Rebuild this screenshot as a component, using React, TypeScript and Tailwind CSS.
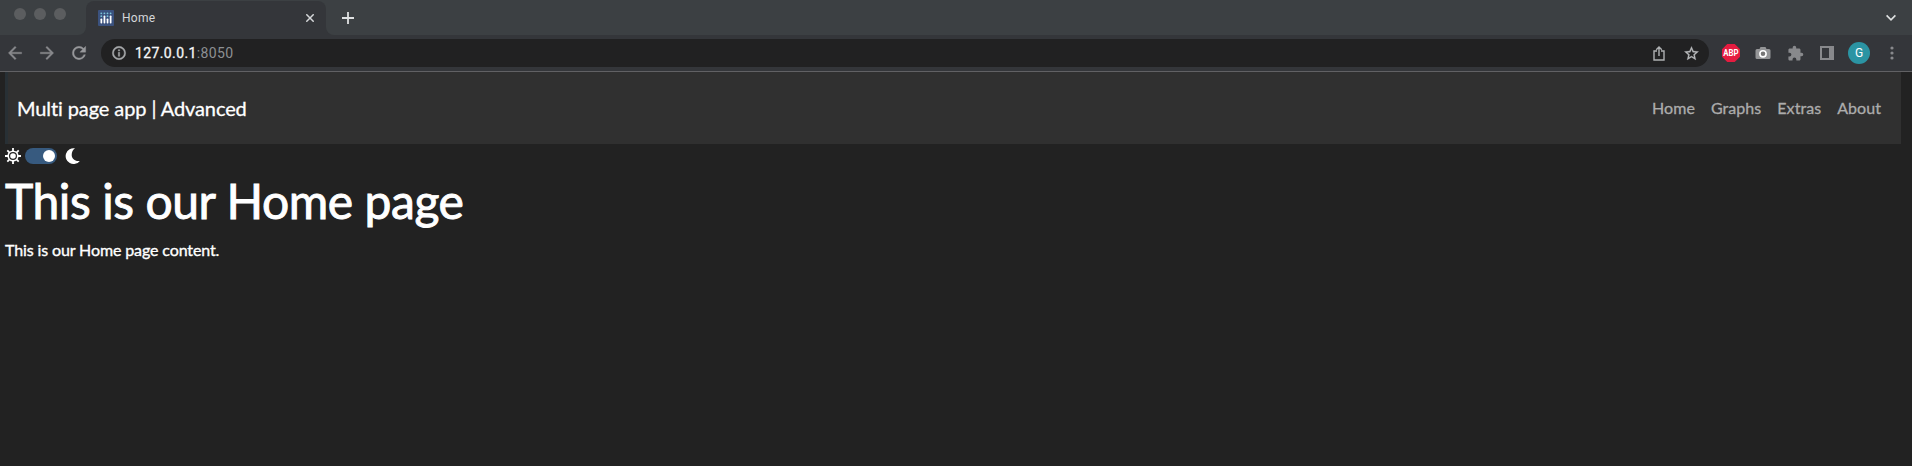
import React from "react";

const material = "shrink-0 fill-current";

function TabStrip() {
  return (
    <div className="flex h-[35px] bg-[#3c4043]">
      <div className="flex w-[86px] gap-2 pt-2 pl-[14px]">
        <span className="size-3 rounded-full bg-[#5b5d5f]" />
        <span className="size-3 rounded-full bg-[#5b5d5f]" />
        <span className="size-3 rounded-full bg-[#5b5d5f]" />
      </div>
      <div className="relative mt-px flex h-[34px] w-[240px] items-center rounded-t-lg bg-[#34363a] pl-3 text-[#d5d7d9]">
        <svg className="absolute bottom-0 -left-2 fill-[#34363a]" width="8" height="8">
          <path d="M8 0v8H0a8 8 0 0 0 8-8Z" />
        </svg>
        <svg className="absolute -right-2 bottom-0 fill-[#34363a]" width="8" height="8">
          <path d="M0 0v8h8a8 8 0 0 1-8-8Z" />
        </svg>
        <svg width="16" height="16" viewBox="0 0 16 16">
          <rect width="16" height="16" rx="1" fill="#3b527f" />
          <g fill="#7cc4d8">
            <circle cx="3.3" cy="3.3" r=".9" />
            <circle cx="6.4" cy="3.3" r=".9" />
            <circle cx="9.5" cy="3.3" r=".9" />
            <circle cx="12.6" cy="3.3" r=".9" />
            <circle cx="3.3" cy="6.2" r=".9" />
            <circle cx="9.5" cy="6.2" r=".9" />
          </g>
          <g fill="#fff">
            <rect x="2.5" y="8.5" width="1.7" height="5" rx=".7" />
            <rect x="5.6" y="5.5" width="1.7" height="8" rx=".7" />
            <rect x="8.7" y="8.5" width="1.7" height="5" rx=".7" />
            <rect x="11.8" y="5.5" width="1.7" height="8" rx=".7" />
          </g>
        </svg>
        <span className="ml-2 text-[12px] leading-4 tracking-[0.3px]">Home</span>
        <svg className="mr-3 ml-auto" width="8" height="8" viewBox="0 0 8 8" stroke="currentColor" strokeWidth="1.5">
          <path d="M.3.3l7.4 7.4M7.7.3L.3 7.7" />
        </svg>
      </div>
      <svg className="mt-3 ml-4 text-[#dfe1e2]" width="12" height="12" viewBox="0 0 12 12" stroke="currentColor" strokeWidth="1.8">
        <path d="M6 0v12M0 6h12" />
      </svg>
      <svg className="mt-[14px] mr-4 ml-auto" width="10" height="8" viewBox="0 0 10 8" fill="none" stroke="#dfe1e2" strokeWidth="1.6">
        <path d="M.6 1.4L5 5.8l4.4-4.4" />
      </svg>
    </div>
  );
}

function Toolbar() {
  return (
    <div className="flex h-9 items-center bg-[#34363a] text-[#88898c]">
      <svg className={`${material} ml-[5px]`} width="20" height="20" viewBox="0 0 24 24" stroke="currentColor" strokeWidth=".4">
        <path d="M20 11H7.83l5.59-5.59L12 4l-8 8 8 8 1.41-1.41L7.83 13H20v-2z" />
      </svg>
      <svg className={`${material} ml-3`} width="20" height="20" viewBox="0 0 24 24" stroke="currentColor" strokeWidth=".4">
        <path d="M12 4l-1.41 1.41L16.17 11H4v2h12.17l-5.58 5.59L12 20l8-8z" />
      </svg>
      <svg className={`${material} ml-3 text-[#97989b]`} width="20" height="20" viewBox="0 0 24 24" stroke="currentColor" strokeWidth=".4">
        <path d="M17.65 6.35A7.958 7.958 0 0 0 12 4a8 8 0 1 0 7.73 10h-2.08A5.99 5.99 0 0 1 12 18c-3.31 0-6-2.69-6-6s2.69-6 6-6c1.66 0 3.14.69 4.22 1.78L13 11h7V4l-2.35 2.35z" />
      </svg>
      <div className="ml-3 flex h-7 w-[1608px] items-center rounded-full bg-[#212122] pr-[9px] pl-[10px]">
        <svg className={`${material} text-[#a5a7a9]`} width="16" height="16" viewBox="0 0 24 24" stroke="currentColor" strokeWidth=".7">
          <path d="M11 7h2v2h-2zM11 11h2v6h-2zM12 2a10 10 0 1 0 0 20 10 10 0 0 0 0-20zm0 18a8 8 0 1 1 0-16 8 8 0 0 1 0 16z" />
        </svg>
        <span className="ml-2 text-[14px] leading-5 tracking-[0.38px]">
          <span className="text-[#f5f6f7] [-webkit-text-stroke:0.3px_#f5f6f7]">127.0.0.1</span>
          <span className="text-[#8d9093]">:8050</span>
        </span>
        <svg className="ml-auto" width="12" height="15" viewBox="0 0 12 15" fill="none" stroke="#afb1b3" strokeWidth="1.4">
          <path d="M4 5H1v9h10V5H8M6 10V1.2M3.2 3.8L6 1l2.8 2.8" />
        </svg>
        <svg className="ml-[18px] fill-[#b9bbbd]" width="17" height="17" viewBox="0 0 24 24" stroke="#b9bbbd" strokeWidth=".4">
          <path d="M22 9.24l-7.19-.62L12 2 9.19 8.63 2 9.24l5.46 4.73L5.82 21 12 17.27 18.18 21l-1.63-7.03L22 9.24zM12 15.4l-3.76 2.27 1-4.28-3.32-2.88 4.38-.38L12 6.1l1.71 4.04 4.38.38-3.32 2.88 1 4.28L12 15.4z" />
        </svg>
      </div>
      <svg className="ml-[13px]" width="18" height="18" viewBox="0 0 16 16">
        <path d="M4.7 0h6.6L16 4.7v6.6L11.300 16H4.700L0 11.300V4.700Z" fill="#e51c40" />
        <text x="8" y="10.7" textAnchor="middle" textLength="13.6" lengthAdjust="spacingAndGlyphs" fontSize="7.6" fontWeight="700" fill="#fff">ABP</text>
      </svg>
      <svg className="ml-[15px]" width="16" height="16" viewBox="0 0 16 16">
        <path d="M2 4h2.500L5.500 2h5L11.500 4H14a1.500 1.500 0 0 1 1.500 1.500v7A1.500 1.500 0 0 1 14 14H2a1.500 1.500 0 0 1-1.500-1.500v-7A1.500 1.500 0 0 1 2 4Z" fill="#949597" />
        <circle cx="8" cy="8.800" r="3.100" fill="#777" stroke="#fff" strokeWidth="1.600" />
      </svg>
      <svg className={`${material} ml-4`} width="17" height="17" viewBox="0 0 24 24">
        <path d="M20.5 11H19V7c0-1.1-.9-2-2-2h-4V3.5a2.5 2.5 0 0 0-5 0V5H4c-1.1 0-1.99.9-1.99 2v3.8H3.5a2.7 2.7 0 0 1 0 5.4H2V20c0 1.1.9 2 2 2h3.8v-1.5a2.7 2.7 0 0 1 5.4 0V22H17c1.1 0 2-.9 2-2v-4h1.5a2.5 2.5 0 0 0 0-5z" />
      </svg>
      <svg className="ml-4 fill-current" width="14" height="14" viewBox="0 0 14 14">
        <path fillRule="evenodd" d="M0 0h14v14H0ZM2 2v10h7V2Z" />
      </svg>
      <span className="ml-[14px] flex size-[22px] items-center justify-center rounded-full bg-[#2b94a3] text-[12px] text-white">G</span>
      <svg className="ml-5 fill-current" width="4" height="14" viewBox="0 0 4 14">
        <circle cx="2" cy="2" r="1.600" />
        <circle cx="2" cy="7" r="1.600" />
        <circle cx="2" cy="12" r="1.600" />
      </svg>
    </div>
  );
}

const links = ["Home", "Graphs", "Extras", "About"];

export default function App() {
  return (
    <div className="h-[466px] overflow-hidden bg-[#222] font-['Roboto',sans-serif]">
      <TabStrip />
      <Toolbar />
      <div className="h-px bg-[#616164]" />
      <div className="pr-[11px] pl-[5px] font-['Lato',sans-serif] text-white">
        <nav className="flex h-[72px] items-center justify-between border-l-3 border-[#283035] bg-[#303030] pr-5 pl-[9px]">
          <a className="text-[20px] leading-[30px] tracking-[-0.1px] [-webkit-text-stroke:0.3px_white]">Multi page app | Advanced</a>
          <div className="flex gap-4 text-[16px] leading-6 tracking-[0.06px] text-[#acacac] [-webkit-text-stroke:0.3px_#acacac]">
            {links.map((label) => (
              <a key={label}>{label}</a>
            ))}
          </div>
        </nav>
        <div className="flex h-6 items-center">
          <svg width="16" height="16" viewBox="0 0 16 16" fill="none" stroke="#fff">
            <circle cx="8" cy="8" r="4.800" strokeWidth="1.600" />
            <circle cx="8" cy="8" r="2.800" fill="#fff" stroke="none" />
            <path strokeWidth="1.800" d="M8 0v3M8 13v3M0 8h3M13 8h3M2.300 2.300l2 2M11.700 11.700l2 2M2.300 13.700l2-2M11.700 4.300l2-2" />
          </svg>
          <div className="ml-1 flex h-4 w-8 items-center justify-end rounded-full bg-[#375a7f] pr-[2px]">
            <span className="size-3 rounded-full bg-white" />
          </div>
          <svg className="ml-2 fill-white" width="16" height="16" viewBox="0 0 16 16">
            <path d="M10 .3A7.900 7.900 0 1 0 14.800 12.900C10.300 13.700 6.900 11 6.700 7.300C6.600 4.500 7.800 1.800 10 .3Z" />
          </svg>
        </div>
        <h1 className="mt-1 text-[48px] leading-[58px] tracking-[-0.43px] [-webkit-text-stroke:0.9px_white]">This is our Home page</h1>
        <div className="mt-2 text-[16px] leading-6 tracking-[-0.12px] [-webkit-text-stroke:0.35px_white]">This is our Home page content.</div>
      </div>
    </div>
  );
}
